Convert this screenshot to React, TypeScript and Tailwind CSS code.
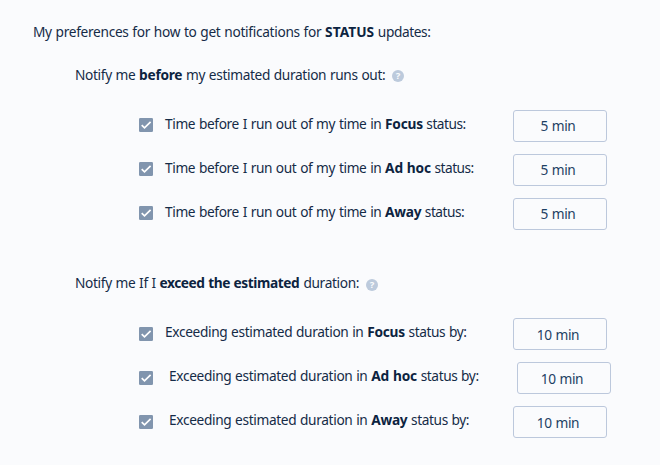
import React from "react";

type Row = { bold: string; value: string; indent?: boolean; tracking?: string };

const beforeRows: Row[] = [
  { bold: "Focus", value: "5 min" },
  { bold: "Ad hoc", value: "5 min", tracking: "tracking-[-0.15px]" },
  { bold: "Away", value: "5 min" },
];

const exceedRows: Row[] = [
  { bold: "Focus", value: "10 min" },
  { bold: "Ad hoc", value: "10 min", indent: true, tracking: "tracking-[-0.15px]" },
  { bold: "Away", value: "10 min" },
];

function Check() {
  return (
    <svg className="block size-3.5 shrink-0" viewBox="0 0 14 14">
      <rect width="14" height="14" rx="1.3" fill="#8195ae" />
      <path d="M2.7 7.2 5.5 9.8 11.6 3.9" fill="none" stroke="#fff" strokeWidth="1.7" />
    </svg>
  );
}

function Help() {
  return (
    <span className="flex size-3 items-center justify-center rounded-full bg-[#bccadc] text-[9.5px] leading-none font-bold tracking-normal text-[#f9fbfd]">
      ?
    </span>
  );
}

function B({ children, tracking = "tracking-[-0.25px]" }: { children: React.ReactNode; tracking?: string }) {
  return <b className={`font-bold text-[#0c2340] ${tracking}`}>{children}</b>;
}

function Value({ children, className }: { children: React.ReactNode; className: string }) {
  return (
    <div
      className={`flex h-8 w-[94px] shrink-0 justify-center rounded-[3px] border border-[#bcc8dc] pr-1 leading-5 text-[#1d3f63] ${className}`}
    >
      {children}
    </div>
  );
}

export default function App() {
  return (
    <main className="h-[465px] w-[660px] overflow-hidden bg-[#fafbfd] font-['Noto_Sans',sans-serif] text-[13.7px] leading-5 tracking-[-0.34px] [word-spacing:0.5px] whitespace-pre text-[#152b47]">
      <h1 className="pt-[22px] pl-[33px] tracking-[-0.3px]">
        My preferences for how to get notifications for{" "}
        <B tracking="tracking-[0.05px]">STATUS</B>
        <span className="tracking-[-0.4px]"> updates:</span>
      </h1>

      <section className="pt-[23px]">
        <div className="flex h-5 pl-[75px]">
          <h2 className="w-[317px]">
            Notify me <B>before</B> my estimated duration runs out:
          </h2>
          <div className="pt-[5px]"><Help /></div>
        </div>
        <ul className="mt-[25px] flex flex-col gap-3 pl-[139px]">
          {beforeRows.map((r) => (
            <li key={r.bold} className="flex h-8">
              <div className="pt-2"><Check /></div>
              <p className="w-[360px] pt-1 pl-3 tracking-[-0.36px]">
                Time before I run out of my time in <B tracking={r.tracking}>{r.bold}</B>
                <span className="tracking-[-0.5px]"> status:</span>
              </p>
              <Value className="pt-[5px]">{r.value}</Value>
            </li>
          ))}
        </ul>
      </section>

      <section className="pt-[43px]">
        <div className="flex h-5 pl-[75px]">
          <h2 className="w-[291px]">
            Notify me If I <B tracking="tracking-[-0.42px]">exceed the estimated</B>
            <span className="[word-spacing:1px]"> duration:</span>
          </h2>
          <div className="pt-1.5"><Help /></div>
        </div>
        <ul className="mt-[25px] flex flex-col gap-3 pl-[139px]">
          {exceedRows.map((r, i) => (
            <li key={r.bold} className="flex h-8">
              <div className="pt-[9px]"><Check /></div>
              <p className={`pt-1 ${r.indent ? "w-[364px]" : "w-[360px]"} ${i > 0 ? "pl-4" : "pl-3"}`}>
                Exceeding estimated duration in <B tracking={r.tracking}>{r.bold}</B>
                <span className="tracking-[-0.4px]"> status by:</span>
              </p>
              <Value className="pt-1.5">{r.value}</Value>
            </li>
          ))}
        </ul>
      </section>
    </main>
  );
}
